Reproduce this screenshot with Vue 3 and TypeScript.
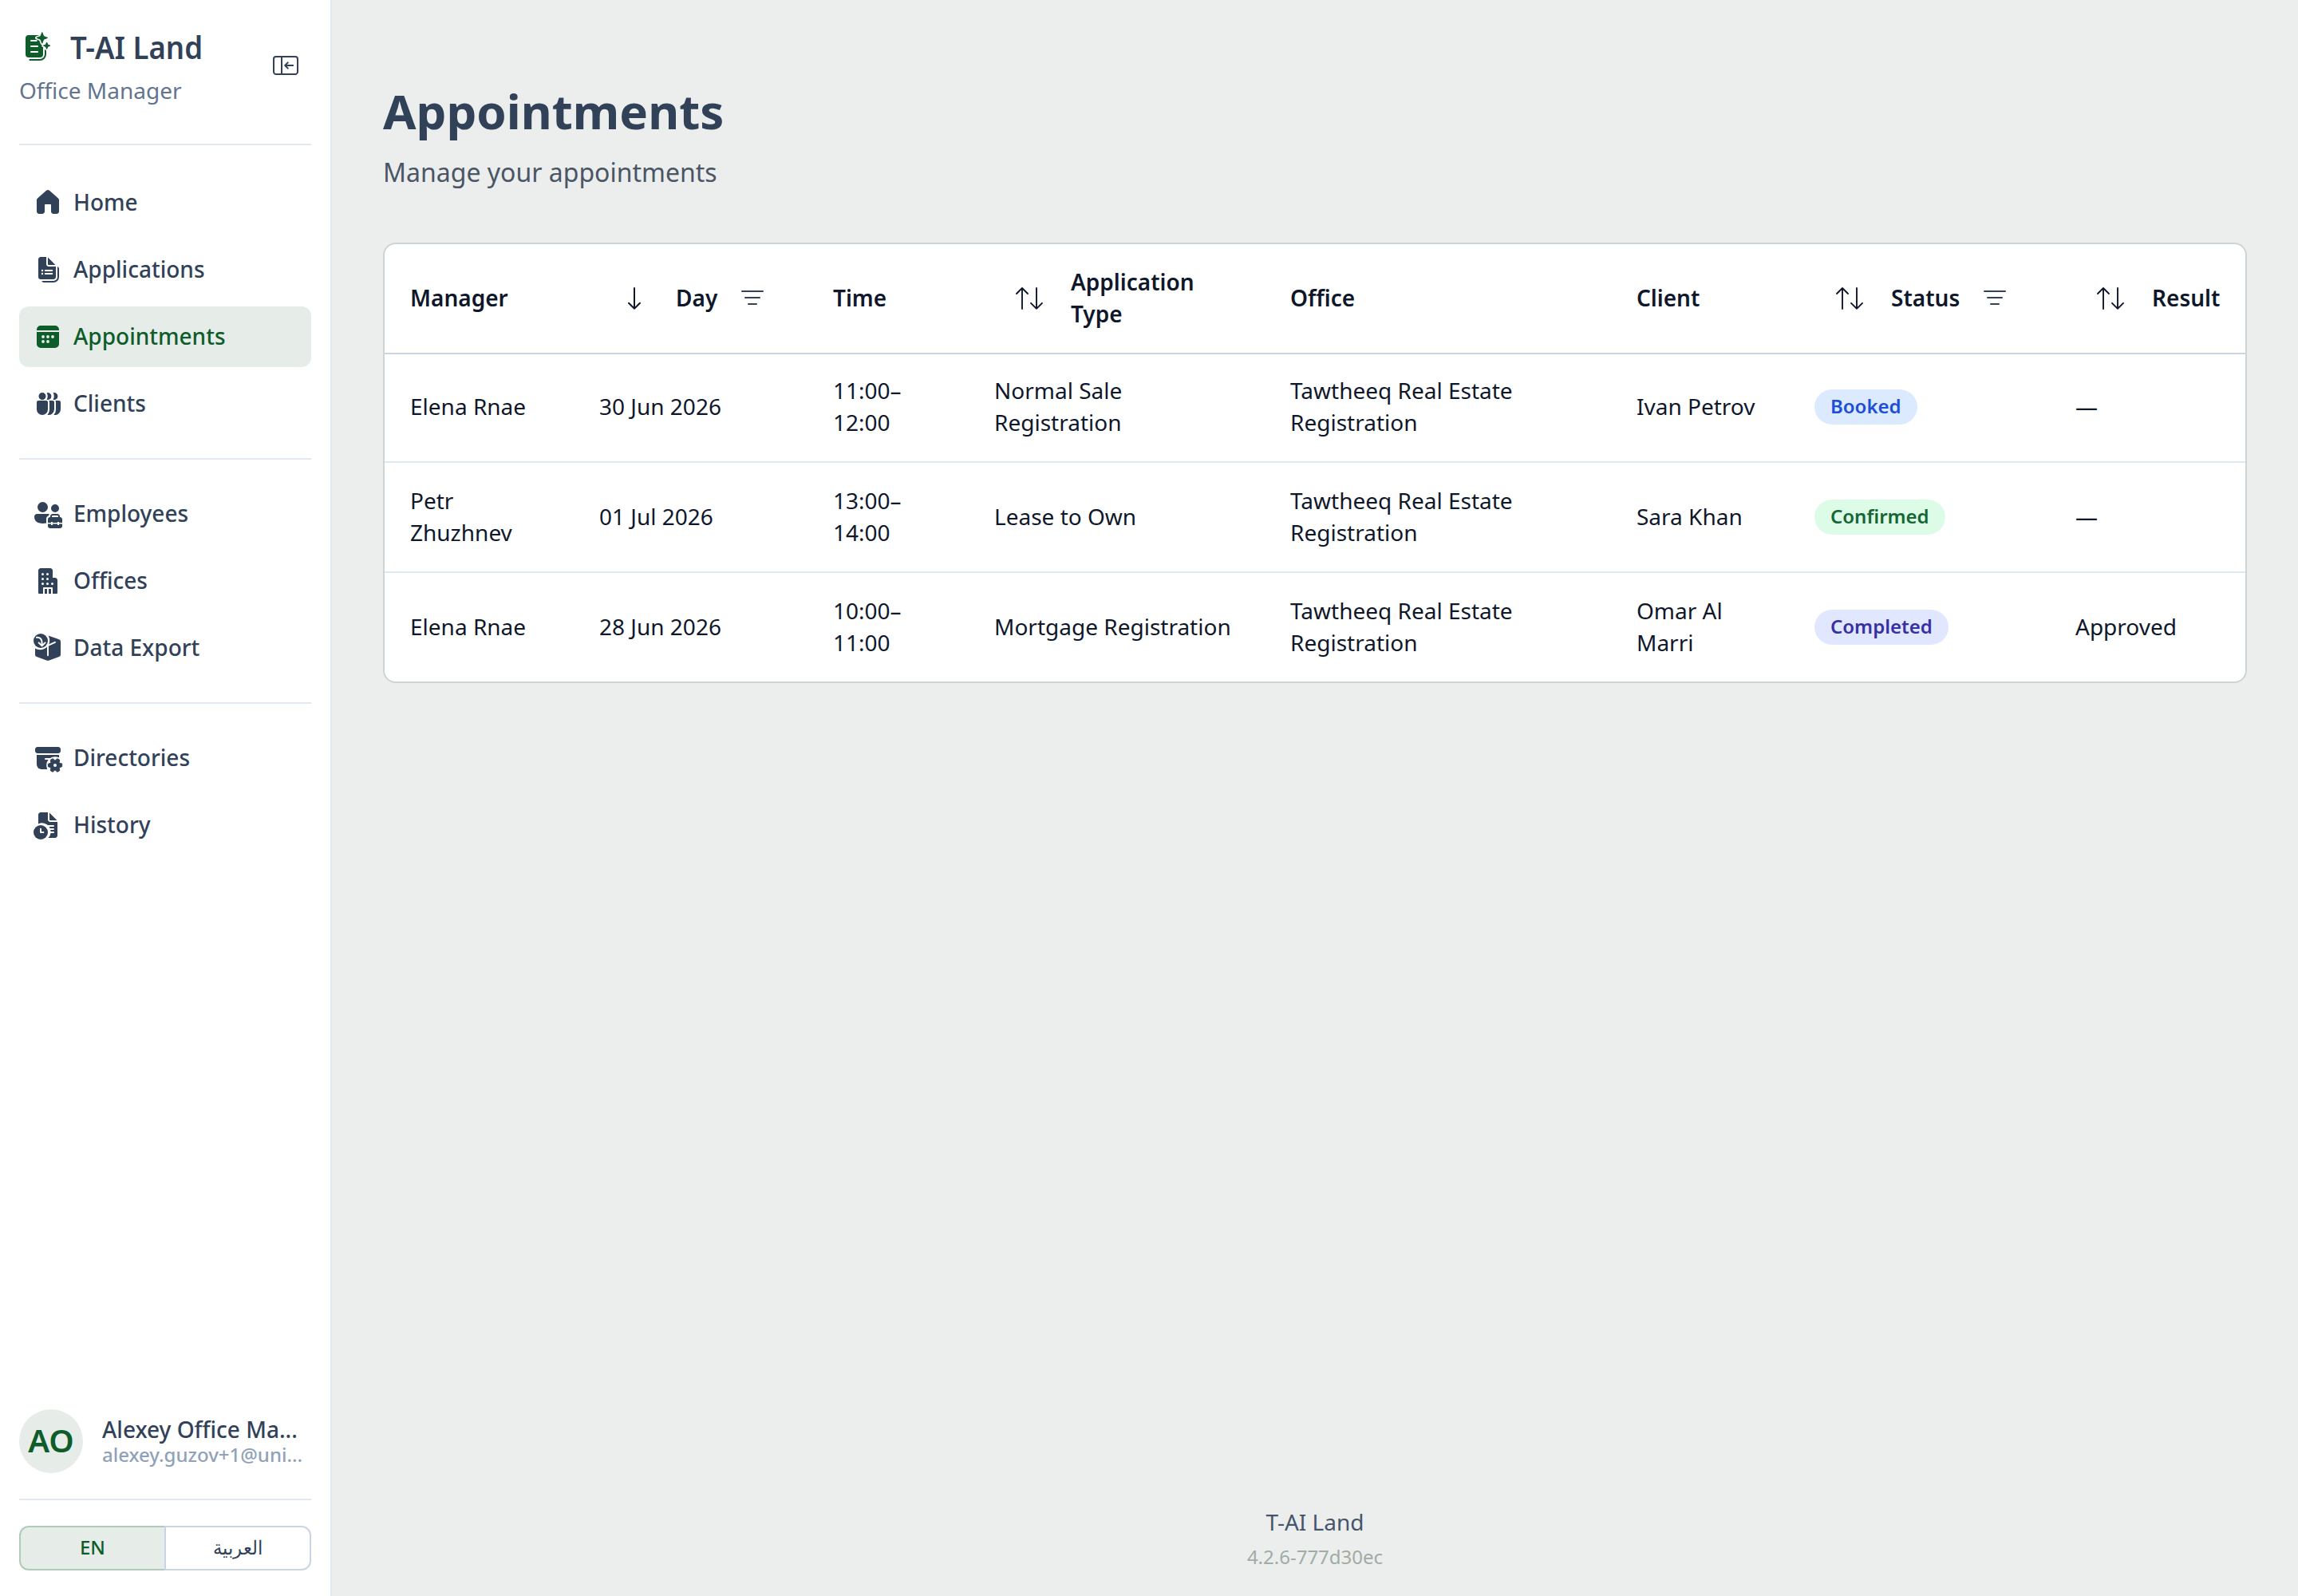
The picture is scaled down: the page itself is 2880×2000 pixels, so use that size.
<script setup lang="ts">
import { h, type FunctionalComponent } from 'vue'

type IconName =
  | 'home' | 'documents' | 'calendar' | 'people' | 'team' | 'building'
  | 'boxArrow' | 'archiveGear' | 'docClock' | 'sortDown' | 'sort' | 'filter' | 'panel'

interface Shape {
  d: string
  cut?: boolean
  line?: number
}

const hole = (x: number, y: number, r = 0.95): string =>
  `M${x - r} ${y}a${r} ${r} 0 1 0 ${r * 2} 0a${r} ${r} 0 1 0 ${-r * 2} 0Z`

const gear =
  'M18.82 13.66V15.34L17.01 15.95L17.39 17.82L15.93 18.66L14.5 17.4L13.07 18.66L11.61 17.82L11.99 15.95L10.18 15.34V13.66L11.99 13.05L11.61 11.18L13.07 10.34L14.5 11.6L15.93 10.34L17.39 11.18L17.01 13.05Z'

const icons: Record<IconName, Shape[]> = {
  home: [{ d: 'M10.99 2.4a1.5 1.5 0 0 0-1.98 0L3.51 7.3A1.5 1.5 0 0 0 3 8.42v7.08C3 16.33 3.67 17 4.5 17h2c.83 0 1.5-.67 1.5-1.5v-4c0-.28.22-.5.5-.5h3c.28 0 .5.22.5.5v4c0 .83.67 1.5 1.5 1.5h2c.83 0 1.5-.67 1.5-1.5V8.42c0-.43-.18-.84-.5-1.12l-5.51-4.9Z' }],
  documents: [
    { d: 'M9 2v4.5C9 7.33 9.67 8 10.5 8H15v6.5c0 .83-.67 1.5-1.5 1.5h-8A1.5 1.5 0 0 1 4 14.5v-11C4 2.67 4.67 2 5.5 2H9Zm1 .25V6.5c0 .28.22.5.5.5h4.25L10 2.25Z' },
    { d: 'M16 8v6.5a2.5 2.5 0 0 1-2.5 2.5H6.1c.2.6.76 1 1.4 1h6A3.5 3.5 0 0 0 17 14.5v-5c0-.65-.42-1.3-1-1.5Z' },
    { d: hole(6.5, 10.5, 0.6) + hole(6.5, 12.5, 0.6), cut: true },
    { d: 'M8.4 10.5h4.2M8.4 12.5h4.2', cut: true, line: 1 },
  ],
  calendar: [
    { d: 'M3 6V5.5A2.5 2.5 0 0 1 5.5 3h9A2.5 2.5 0 0 1 17 5.5V6H3Zm0 1h14v7.5a2.5 2.5 0 0 1-2.5 2.5h-9A2.5 2.5 0 0 1 3 14.5V7Z' },
    { d: hole(7, 10) + hole(10, 10) + hole(13, 10) + hole(7, 13) + hole(10, 13), cut: true },
  ],
  people: [
    { d: 'M4.25 5.25a2.25 2.25 0 1 0 4.5 0a2.25 2.25 0 1 0-4.5 0Z' },
    { d: 'M9.3 3.1a2.25 2.25 0 1 1 0 4.3c.75-1.3.75-3 0-4.3Z' },
    { d: 'M13.3 3.1a2.25 2.25 0 1 1 0 4.3c.75-1.3.75-3 0-4.3Z' },
    { d: 'M4 8h5c.55 0 1 .45 1 1v4.5a3.5 3.5 0 0 1-7 0V9c0-.55.45-1 1-1Z' },
    { d: 'M10.7 8H13c.55 0 1 .45 1 1v4.5a3.5 3.5 0 0 1-4.3 3.4A4.5 4.5 0 0 0 11 13.5V9c0-.37-.1-.7-.3-1Z' },
    { d: 'M14.7 8H17c.55 0 1 .45 1 1v4.5a3.5 3.5 0 0 1-4.3 3.4A4.5 4.5 0 0 0 15 13.5V9c0-.37-.1-.7-.3-1Z' },
  ],
  team: [
    { d: 'M3.5 5.75a3.25 3.25 0 1 0 6.5 0a3.25 3.25 0 1 0-6.5 0Z M12 6.5a2.5 2.5 0 1 0 5 0a2.5 2.5 0 1 0-5 0Z' },
    { d: 'M3.25 10h7.7c-.3.4-.45.8-.45 1.1-.9.2-1.5 1-1.5 2V15.8c-.6.15-1.5.2-2.25.2C3.3 16 1.5 14.5 1.5 11.8c0-1 .7-1.8 1.75-1.8Z' },
    { d: 'M11.5 12v-.5c0-.83.67-1.5 1.5-1.5h3c.83 0 1.5.67 1.5 1.5v.5c.9 0 1.5.6 1.5 1.5V15.5h-2V15h-1v.5h-3V15h-1v.5h-2v-2c0-.9.6-1.5 1.5-1.5Zm1 0h4v-.5a.5.5 0 0 0-.5-.5h-3a.5.5 0 0 0-.5.5v.5Z M10 16.2h2v.8h1v-.8h3v.8h1v-.8h2V17.5c0 .9-.6 1.5-1.5 1.5h-6c-.9 0-1.5-.6-1.5-1.5V16.2Z' },
  ],
  building: [
    { d: 'M4 3.5C4 2.67 4.67 2 5.5 2h6c.83 0 1.5.67 1.5 1.5V8h1.5c.83 0 1.5.67 1.5 1.5v8a.5.5 0 0 1-.5.5H13v-3.5a.5.5 0 0 0-.5-.5h-5a.5.5 0 0 0-.5.5V18H4.5a.5.5 0 0 1-.5-.5v-14Z M8 18v-3h1.5v3H8Zm2.5 0v-3H12v3h-1.5Z' },
    { d: hole(6.75, 5.75, 0.75) + hole(9.75, 5.75, 0.75) + hole(6.75, 8.75, 0.75) + hole(9.75, 8.75, 0.75) + hole(6.75, 11.75, 0.75) + hole(9.75, 11.75, 0.75) + hole(12.75, 11.75, 0.75), cut: true },
  ],
  boxArrow: [
    { d: 'M1 5.5a4.5 4.5 0 1 0 9 0a4.5 4.5 0 1 0-9 0Z' },
    { d: 'M10.3 2.2l6.7 2.4c.6.23 1 .8 1 1.4v8.1c0 .6-.4 1.18-1 1.4l-6.1 2.2c-.6.2-1.2.2-1.8 0L3 15.5c-.6-.22-1-.8-1-1.4v-3.8c2.8 1.6 6.2.7 8-1.6V14.5h.1V8.6c.9-1.3 1.6-3.9.2-6.4Z' },
    { d: 'M9.8 8.6l4.7-2.2M10 8.3v6.3', cut: true, line: 0.95 },
    { d: 'M3 3.4c2-.2 3.3 1 3.3 3.3v1.5M4.3 6.7l2 2 2-2', cut: true, line: 1 },
  ],
  archiveGear: [
    { d: 'M3.5 3h13c.83 0 1.5.67 1.5 1.5v1c0 .83-.67 1.5-1.5 1.5h-13C2.67 7 2 6.33 2 5.5v-1C2 3.67 2.67 3 3.5 3Z' },
    { d: 'M3 8h14v6a3 3 0 0 1-3 3H6a3 3 0 0 1-3-3V8Z' },
    { d: hole(14.5, 14.5, 5.4), cut: true },
    { d: 'M8.5 10.5h4', cut: true, line: 1 },
    { d: gear },
    { d: gear, line: 0.5 },
    { d: hole(14.5, 14.5, 1), cut: true },
  ],
  docClock: [
    { d: 'M10 2v4.5C10 7.33 10.67 8 11.5 8H16v8.5c0 .83-.67 1.5-1.5 1.5h-4.2A5.5 5.5 0 0 0 4 9.2V3.5C4 2.67 4.67 2 5.5 2H10Zm1 .25V6.5c0 .28.22.5.5.5h4.25L11 2.25Z' },
    { d: 'M10.2 10.5H13.5M11.2 12.5h2.3M11.2 14.5h2.3', cut: true, line: 0.95 },
    { d: 'M1 14.5a4.5 4.5 0 1 0 9 0a4.5 4.5 0 1 0-9 0Z' },
    { d: 'M5.5 12.3v2.2h1.7', cut: true, line: 0.95 },
  ],
  sortDown: [{ d: 'M10 3.5v12.9M6.5 12.9l3.5 3.5 3.5-3.5', line: 1 }],
  sort: [{ d: 'M5.5 16.5V3.5M2 7l3.5-3.5L9 7M14.5 3.5v12.9M11 12.9l3.5 3.5 3.5-3.5', line: 0.95 }],
  filter: [{ d: 'M3.5 5.5h13M5.5 9.5h9M7.5 13.5h5', line: 1 }],
  panel: [
    { d: 'M4 4.5h12A1.5 1.5 0 0 1 17.5 6v8a1.5 1.5 0 0 1-1.5 1.5H4A1.5 1.5 0 0 1 2.5 14V6A1.5 1.5 0 0 1 4 4.5ZM7.5 4.5v11M14.6 10H9.7M11.4 8.2L9.6 10l1.8 1.8', line: 1 },
  ],
}

const UiIcon: FunctionalComponent<{ name: IconName; bg?: string }> = (props) =>
  h(
    'svg',
    { viewBox: '0 0 20 20', width: 40, height: 40, style: { flex: 'none', display: 'block' } },
    icons[props.name].map((s) => {
      const color = s.cut ? (props.bg ?? '#fff') : 'currentColor'
      return s.line
        ? h('path', { d: s.d, fill: 'none', stroke: color, 'stroke-width': s.line, 'stroke-linecap': 'round', 'stroke-linejoin': 'round' })
        : h('path', { d: s.d, fill: color, 'fill-rule': s.cut ? 'nonzero' : 'evenodd' })
    }),
  )
UiIcon.props = ['name', 'bg']

interface NavItem {
  label: string
  icon: IconName
  active?: boolean
}

const groups: NavItem[][] = [
  [
    { label: 'Home', icon: 'home' },
    { label: 'Applications', icon: 'documents' },
    { label: 'Appointments', icon: 'calendar', active: true },
    { label: 'Clients', icon: 'people' },
  ],
  [
    { label: 'Employees', icon: 'team' },
    { label: 'Offices', icon: 'building' },
    { label: 'Data Export', icon: 'boxArrow' },
  ],
  [
    { label: 'Directories', icon: 'archiveGear' },
    { label: 'History', icon: 'docClock' },
  ],
]

interface Column {
  label: string
  width: number
  sort?: IconName
  filter?: boolean
}

const columns: Column[] = [
  { label: 'Manager', width: 237 },
  { label: 'Day', width: 293, sort: 'sortDown', filter: true },
  { label: 'Time', width: 202 },
  { label: 'Application Type', width: 371, sort: 'sort' },
  { label: 'Office', width: 434 },
  { label: 'Client', width: 223 },
  { label: 'Status', width: 327, sort: 'sort', filter: true },
  { label: 'Result', width: 245, sort: 'sort' },
]

interface Appointment {
  manager: string
  day: string
  time: string
  type: string
  office: string
  client: string
  status: 'Booked' | 'Confirmed' | 'Completed'
  result: string
}

const office = 'Tawtheeq Real Estate Registration'
const rows: Appointment[] = [
  { manager: 'Elena Rnae', day: '30 Jun 2026', time: '11:00–12:00', type: 'Normal Sale Registration', office, client: 'Ivan Petrov', status: 'Booked', result: '—' },
  { manager: 'Petr Zhuzhnev', day: '01 Jul 2026', time: '13:00–14:00', type: 'Lease to Own', office, client: 'Sara Khan', status: 'Confirmed', result: '—' },
  { manager: 'Elena Rnae', day: '28 Jun 2026', time: '10:00–11:00', type: 'Mortgage Registration', office, client: 'Omar Al Marri', status: 'Completed', result: 'Approved' },
]
</script>

<template>
  <div class="app">
    <aside class="sidebar">
      <header class="brand">
        <div class="brand-text">
          <div class="brand-row">
            <svg class="logo" viewBox="0 0 20 20" width="40" height="40">
              <path fill="currentColor" d="M6 3h7a2 2 0 0 1 2 2v10a2 2 0 0 1-2 2H6a2 2 0 0 1-2-2V5a2 2 0 0 1 2-2Z" />
              <path d="M16.5 12.3V15a3.5 3.5 0 0 1-3.5 3.5H6.7" stroke="currentColor" fill="none" stroke-linecap="round" />
              <g stroke="#fff" stroke-width="2" stroke-linejoin="round" fill="#fff">
                <path d="M14.4 1.3l.95 2.45 2.45.95-2.45.95-.95 2.45-.95-2.45L11 4.7l2.45-.95Z" />
                <path d="M17.3 7.5l.6 1.5 1.5.6-1.5.6-.6 1.5-.6-1.5-1.5-.6 1.5-.6Z" />
              </g>
              <g stroke="currentColor" stroke-width="0.5" stroke-linejoin="round" fill="currentColor">
                <path d="M14.4 1.3l.95 2.45 2.45.95-2.45.95-.95 2.45-.95-2.45L11 4.7l2.45-.95Z" />
                <path d="M17.3 7.5l.6 1.5 1.5.6-1.5.6-.6 1.5-.6-1.5-1.5-.6 1.5-.6Z" />
              </g>
              <path d="M7.5 6.5h3.3M7.5 10h4M7.5 13.5h4" stroke="#fff" fill="none" stroke-linecap="round" />
            </svg>
            <span class="brand-name">T-AI Land</span>
          </div>
          <div class="brand-role">Office Manager</div>
        </div>
        <button class="collapse" type="button" aria-label="Collapse sidebar"><UiIcon name="panel" /></button>
      </header>

      <nav>
        <ul v-for="(group, g) in groups" :key="g" class="group">
          <li v-for="item in group" :key="item.label" class="item" :class="{ active: item.active }">
            <UiIcon :name="item.icon" :bg="item.active ? '#e6ede9' : '#fff'" />
            <span class="label">{{ item.label }}</span>
          </li>
        </ul>
      </nav>

      <div class="user">
        <div class="avatar">AO</div>
        <div class="user-text">
          <div class="user-name">Alexey Office Ma...</div>
          <div class="user-mail">alexey.guzov+1@uni...</div>
        </div>
      </div>
      <div class="langs">
        <button type="button" class="lang on">EN</button>
        <button type="button" class="lang"><span class="arabic">العربية</span></button>
      </div>
    </aside>

    <main class="main">
      <h1>Appointments</h1>
      <p class="sub">Manage your appointments</p>

      <div class="card">
        <table>
          <colgroup>
            <col v-for="c in columns" :key="c.label" :style="{ width: c.width + 'px' }" />
          </colgroup>
          <thead>
            <tr>
              <th v-for="c in columns" :key="c.label">
                <div class="head">
                  <span v-if="c.sort" class="sort"><UiIcon :name="c.sort" /></span>
                  <span class="label">{{ c.label }}</span>
                  <span v-if="c.filter" class="filter"><UiIcon name="filter" /></span>
                </div>
              </th>
            </tr>
          </thead>
          <tbody>
            <tr v-for="(r, i) in rows" :key="i">
              <td><div class="cell">{{ r.manager }}</div></td>
              <td><div class="cell">{{ r.day }}</div></td>
              <td><div class="cell">{{ r.time }}</div></td>
              <td><div class="cell">{{ r.type }}</div></td>
              <td><div class="cell">{{ r.office }}</div></td>
              <td><div class="cell">{{ r.client }}</div></td>
              <td><span class="badge" :class="r.status.toLowerCase()">{{ r.status }}</span></td>
              <td><div class="cell">{{ r.result }}</div></td>
            </tr>
          </tbody>
        </table>
      </div>

      <footer>
        <div class="foot-name">T-AI Land</div>
        <div class="foot-version">4.2.6-777d30ec</div>
      </footer>
    </main>
  </div>
</template>

<style>
body {
  margin: 0;
}
</style>

<style scoped>
.app {
  display: flex;
  height: 2000px;
  box-sizing: border-box;
  background: #eceeed;
  color: #0f172b;
  font-family: 'Noto Sans', 'Open Sans', sans-serif;
  font-size: 28px;
  line-height: 40px;
}
.app * {
  box-sizing: border-box;
}
button {
  font: inherit;
  color: inherit;
  background: none;
  border: 0;
  padding: 0;
}
.sidebar {
  flex: none;
  width: 416px;
  display: flex;
  flex-direction: column;
  padding: 32px 24px;
  background: #fff;
  border-right: 2px solid #e2e8f0;
  color: #314158;
}
.brand {
  display: flex;
  justify-content: space-between;
  height: 150px;
  border-bottom: 2px solid #e2e8f0;
}
.brand-row {
  display: flex;
  align-items: center;
  height: 56px;
}
.logo {
  flex: none;
  color: #0f5c2b;
  margin-bottom: 4px;
}
.brand-name {
  margin: 0 0 3px 24px;
  font-size: 40px;
  font-weight: 600;
  line-height: 56px;
  transform: scaleX(0.913);
  transform-origin: left center;
}
.brand-role {
  margin-top: 5px;
  color: #62748e;
}
.collapse {
  width: 40px;
  height: 40px;
  margin: 30px 12px 0 0;
}
nav {
  flex: 1;
}
.label {
  padding-bottom: 2px;
}
.group {
  list-style: none;
  margin: 0;
  padding: 30px 0;
  display: flex;
  flex-direction: column;
  gap: 8px;
}
.group:first-child {
  padding-top: 34px;
}
.group + .group {
  border-top: 2px solid #e2e8f0;
}
.item {
  display: flex;
  align-items: center;
  gap: 12px;
  height: 76px;
  padding: 0 16px;
  border-radius: 12px;
  font-weight: 500;
}
.item.active {
  background: #e6ede9;
  color: #0f5c2b;
}
.user {
  display: flex;
  align-items: center;
  gap: 24px;
  height: 114px;
  padding-bottom: 32px;
  border-bottom: 2px solid #e2e8f0;
}
.avatar {
  flex: none;
  width: 80px;
  height: 80px;
  padding-bottom: 3px;
  border-radius: 50%;
  display: flex;
  align-items: center;
  justify-content: center;
  background: #e6ede9;
  color: #0f5c2b;
  font-size: 40px;
  font-weight: 600;
}
.user-text {
  padding-top: 2px;
  font-weight: 500;
  white-space: nowrap;
}
.user-name {
  line-height: 32px;
}
.user-mail {
  color: #90a1b9;
  font-size: 24px;
  line-height: 32px;
}
.langs {
  display: flex;
  margin-top: 32px;
  height: 56px;
}
.lang {
  width: 184px;
  padding-bottom: 3px;
  border: 2px solid #cad5e2;
  border-radius: 0 12px 12px 0;
  font-size: 24px;
  font-weight: 500;
}
.lang.on {
  width: 182px;
  border-color: #b0cbba;
  border-right: 0;
  border-radius: 12px 0 0 12px;
  background: #e6ede9;
  color: #0f5c2b;
}
.arabic {
  display: inline-block;
  transform: scaleX(0.95);
}
.main {
  flex: 1;
  display: flex;
  flex-direction: column;
  padding: 96px 64px 0;
}
h1 {
  margin: 0;
  font-size: 60px;
  font-weight: 700;
  line-height: 86px;
  color: #314158;
}
.sub {
  margin: 10px 0 64px;
  font-size: 32px;
  line-height: 48px;
  color: #4a5565;
}
.card {
  background: #fff;
  border: 2px solid #ccd6ce;
  border-radius: 16px;
  overflow: hidden;
}
table {
  width: 2332px;
  table-layout: fixed;
  border-collapse: separate;
  border-spacing: 0;
}
th,
td {
  height: 136px;
  padding: 0 32px;
  text-align: left;
  vertical-align: middle;
  border-bottom: 2px solid #e2e8f0;
}
th {
  height: 138px;
  font-weight: 600;
  border-bottom-color: #cad5e2;
}
tbody tr:first-child td {
  padding-bottom: 2px;
}
tbody tr:nth-child(2) td {
  height: 138px;
}
tbody tr:last-child td {
  border-bottom: 0;
}
.cell {
  padding-bottom: 2px;
}
.head {
  display: flex;
  align-items: center;
}
.sort {
  flex: none;
  padding: 0 32px 0 24px;
}
.filter {
  flex: none;
  padding-left: 24px;
  color: #314158;
}
.badge {
  display: block;
  width: fit-content;
  height: 44px;
  padding: 0 20px;
  border-radius: 22px;
  font-size: 24px;
  font-weight: 600;
  line-height: 41px;
}
.booked {
  background: #dbeafe;
  color: #1d4ed8;
}
.confirmed {
  background: #dcfce7;
  color: #166534;
}
.completed {
  background: #e0e7ff;
  color: #3730a3;
}
footer {
  margin-top: auto;
  padding-bottom: 33px;
  text-align: center;
}
.foot-name {
  color: #45556c;
}
.foot-version {
  margin-top: 8px;
  font-size: 24px;
  line-height: 32px;
  color: #a0aca4;
}
</style>
